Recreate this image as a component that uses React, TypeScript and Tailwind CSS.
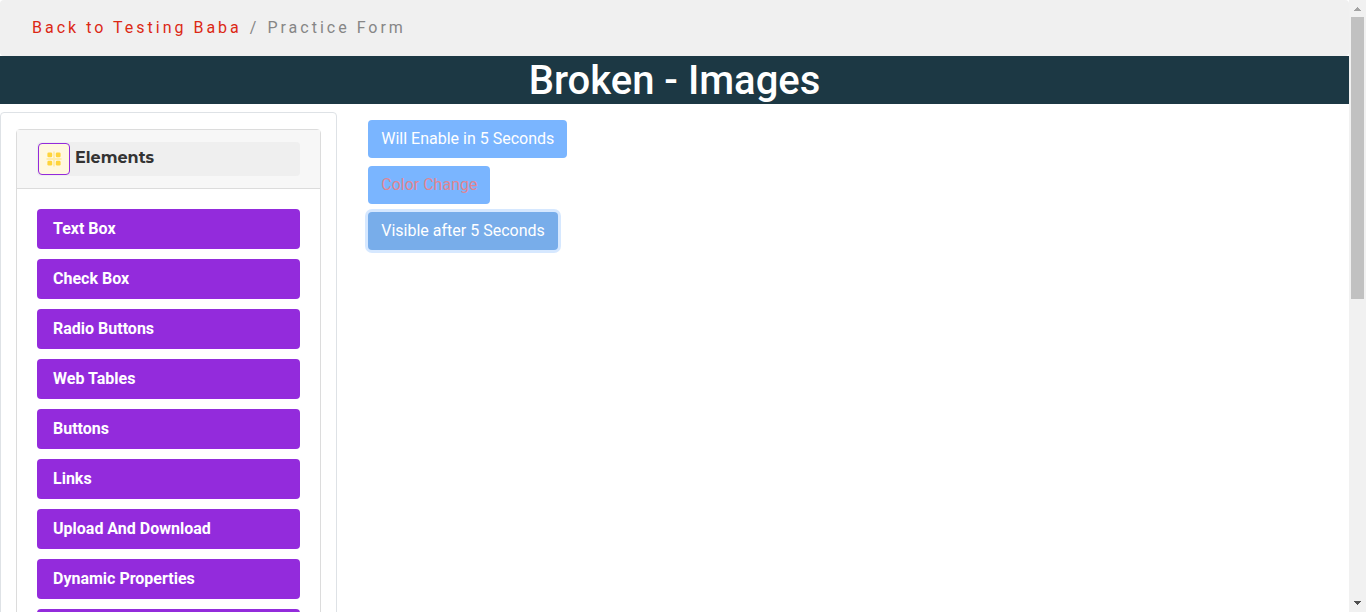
const items = [
  'Text Box',
  'Check Box',
  'Radio Buttons',
  'Web Tables',
  'Buttons',
  'Links',
  'Upload And Download',
  'Dynamic Properties',
  'Broken - Images',
];

function GridIcon() {
  return (
    <svg width="16" height="16" viewBox="0 0 16 16" aria-hidden="true">
      <path d="M8 0.5v15M0.5 8h15" stroke="#ffecaa" strokeWidth="1.8" />
      <g fill="#ffd43b">
        <rect x="1.4" y="1.4" width="4.8" height="4.8" rx="1.3" />
        <rect x="9.8" y="1.4" width="4.8" height="4.8" rx="1.3" />
        <rect x="1.4" y="9.8" width="4.8" height="4.8" rx="1.3" />
        <rect x="9.8" y="9.8" width="4.8" height="4.8" rx="1.3" />
      </g>
    </svg>
  );
}

function Sidebar() {
  return (
    <aside className="w-1/4 shrink-0 rounded border border-[#dee2e6] px-[15px] py-4">
      <div className="rounded border border-[#dcdcdc]">
        <div className="border-b border-[#dcdcdc] bg-[#f7f7f7] px-5 py-3">
          <button
            type="button"
            className="flex h-[34px] w-full items-center gap-[5px] rounded bg-[#efefef] pl-px text-left"
          >
            <span className="flex size-8 items-center justify-center rounded border border-[#932bdc] bg-[#fff8df]">
              <GridIcon />
            </span>
            <span className="pb-0.5 font-['Montserrat','Inter',sans-serif] text-base leading-6 font-bold text-[#333]">
              Elements
            </span>
          </button>
        </div>
        <ul className="flex flex-col gap-2.5 p-5">
          {items.map((item) => (
            <li key={item}>
              <a
                href="#"
                className="block rounded bg-[#932bdc] px-4 py-2 text-base leading-6 font-bold text-white"
              >
                {item}
              </a>
            </li>
          ))}
        </ul>
      </div>
    </aside>
  );
}

function Scrollbar() {
  return (
    <div
      className="flex w-[17px] shrink-0 flex-col items-center justify-between bg-[#f1f1f1]"
      aria-hidden="true"
    >
      <svg width="17" height="17" viewBox="0 0 17 17" shapeRendering="crispEdges">
        <path d="M8 7h1v1h1v1h1v1h1v1H5v-1h1v-1h1v-1h1z" fill="#a3a3a3" />
      </svg>
      <div className="flex w-[13px] grow flex-col">
        <div className="h-[282px] bg-[#c1c1c1]" />
      </div>
      <svg width="17" height="17" viewBox="0 0 17 17" shapeRendering="crispEdges">
        <path d="M5 6h7v1h-1v1h-1v1H9v1H8V9H7V8H6V7H5z" fill="#505050" />
      </svg>
    </div>
  );
}

export default function App() {
  return (
    <div className="flex h-screen overflow-hidden bg-white font-['Roboto',sans-serif] text-base">
      <div className="min-w-0 grow overflow-hidden">
        <nav aria-label="Breadcrumb" className="rounded bg-[#f0f0f0] px-8 py-4">
          <ol className="flex leading-6 tracking-[3px] text-[#868686]">
            <li>
              <a href="#" className="text-[#dc2814]">
                Back to Testing Baba
              </a>
            </li>
            <li className="flex gap-2 pl-2">
              <span>/</span>
              <span>Practice Form</span>
            </li>
          </ol>
        </nav>
        <h1 className="mb-2 bg-[#1c3844] pt-0.5 text-center text-[40px] leading-[46px] font-medium text-white">
          Broken - Images
        </h1>
        <div className="flex items-start">
          <Sidebar />
          <main className="flex flex-col items-start gap-2 px-[31px] pt-2">
            <button
              type="button"
              disabled
              className="h-[38px] rounded bg-[#7ab5ff] px-[13px] leading-6 text-white"
            >
              Will Enable in 5 Seconds
            </button>
            <button
              type="button"
              className="h-[38px] rounded bg-[#7ab5ff] px-[13px] leading-6 text-[#e18593]"
            >
              Color Change
            </button>
            <button
              type="button"
              className="h-[38px] rounded bg-[#78adea] px-[13px] leading-6 text-white ring-3 ring-[#d6e8ff]"
            >
              Visible after 5 Seconds
            </button>
          </main>
        </div>
      </div>
      <Scrollbar />
    </div>
  );
}
